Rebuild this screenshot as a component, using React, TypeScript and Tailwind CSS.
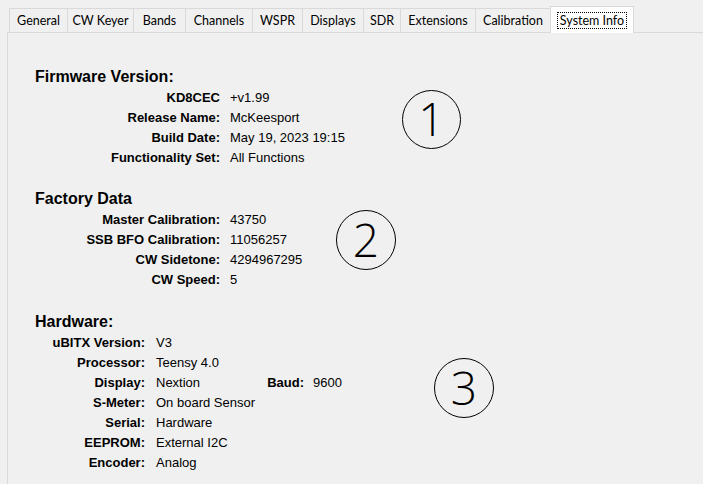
import React from 'react';

const tabs = [
  { name: 'General', w: 'w-[58px]' },
  { name: 'CW Keyer', w: 'w-[66px]' },
  { name: 'Bands', w: 'w-[52px]' },
  { name: 'Channels', w: 'w-[67px]' },
  { name: 'WSPR', w: 'w-[50px]' },
  { name: 'Displays', w: 'w-[61px]' },
  { name: 'SDR', w: 'w-[37px]' },
  { name: 'Extensions', w: 'w-[75px]' },
  { name: 'Calibration', w: 'w-[75px]' },
];

const firmware = [
  ['KD8CEC', '+v1.99'],
  ['Release Name:', 'McKeesport'],
  ['Build Date:', 'May 19, 2023 19:15'],
  ['Functionality Set:', 'All Functions'],
];

const factory = [
  ['Master Calibration:', '43750'],
  ['SSB BFO Calibration:', '11056257'],
  ['CW Sidetone:', '4294967295'],
  ['CW Speed:', '5'],
];

const hardware = [
  ['uBITX Version:', 'V3'],
  ['Processor:', 'Teensy 4.0'],
  ['Display:', 'Nextion'],
  ['S-Meter:', 'On board Sensor'],
  ['Serial:', 'Hardware'],
  ['EEPROM:', 'External I2C'],
  ['Encoder:', 'Analog'],
];

const Marker = ({ n, className }: { n: string; className: string }) => (
  <div
    className={`flex items-center justify-center rounded-full border border-black text-[46px] font-light leading-none text-black font-['Open_Sans',sans-serif] ${className}`}
  >
    <span className="-mt-[3px]">{n}</span>
  </div>
);

const App = () => {
  return (
    <div className="w-[703px] h-[484px] overflow-hidden bg-[#f0f0f0] text-black font-['Liberation_Sans',Arial,sans-serif]">
      {/* Tab strip */}
      <div className="flex items-end h-[26px] mt-[6px] pl-[9px]">
        {tabs.map((t) => (
          <div
            key={t.name}
            className={`${t.w} h-[24px] pt-[1px] border-t border-l border-[#d9d9d9] flex items-center justify-center text-[12.5px] font-['Lato',sans-serif] text-black`}
          >
            {t.name}
          </div>
        ))}
        <div className="relative z-10 w-[84px] h-[27px] -mb-px bg-white border-t border-l border-r border-[#d9d9d9] flex items-start justify-center pt-[5px]">
          <span className="border border-dotted border-black px-[2px] leading-[15px] text-[12.5px] font-['Lato',sans-serif]">
            System Info
          </span>
        </div>
      </div>

      {/* Panel */}
      <div className="ml-[7px] h-[452px] border-l border-t border-[#d9d9d9] pl-[27px] pt-[35px]">
        {/* Firmware */}
        <h2 className="h-[20px] text-[16px] font-bold leading-[17px]">Firmware Version:</h2>
        <div className="flex items-start">
          <div className="w-[345px]">
            {firmware.map(([k, v]) => (
              <div key={k} className="flex text-[13px] leading-[20px]">
                <div className="w-[185px] text-right font-bold">{k}</div>
                <div className="pl-[10px]">{v}</div>
              </div>
            ))}
          </div>
          <Marker n="1" className="ml-[22px] mt-[2px] w-[59px] h-[59px]" />
        </div>

        {/* Factory */}
        <h2 className="mt-[22px] h-[20px] text-[16px] font-bold leading-[17px]">Factory Data</h2>
        <div className="flex items-start">
          <div className="w-[275px]">
            {factory.map(([k, v]) => (
              <div key={k} className="flex text-[13px] leading-[20px]">
                <div className="w-[185px] text-right font-bold">{k}</div>
                <div className="pl-[10px]">{v}</div>
              </div>
            ))}
          </div>
          <Marker n="2" className="ml-[26px] mt-0 w-[60px] h-[60px]" />
        </div>

        {/* Hardware */}
        <h2 className="mt-[23px] h-[20px] text-[16px] font-bold leading-[17px]">Hardware:</h2>
        <div className="flex items-start">
          <div className="w-[360px]">
            {hardware.map(([k, v]) => (
              <div key={k} className="flex text-[13px] leading-[20px]">
                <div className="w-[110px] text-right font-bold">{k}</div>
                <div className="pl-[11px] w-[121px]">{v}</div>
                {k === 'Display:' && (
                  <>
                    <div className="w-[38px] text-right font-bold">Baud:</div>
                    <div className="pl-[9px]">9600</div>
                  </>
                )}
              </div>
            ))}
          </div>
          <Marker n="3" className="ml-[39px] mt-[25px] w-[60px] h-[60px]" />
        </div>
      </div>
    </div>
  );
};

export default App;
